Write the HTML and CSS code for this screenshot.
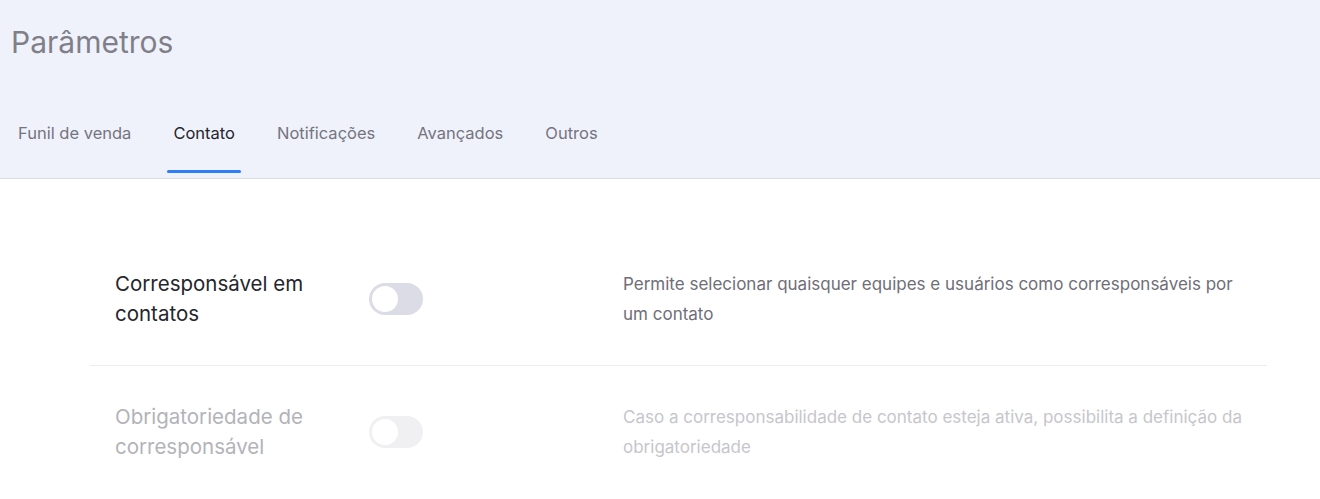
FILE: index.html
```html
<!DOCTYPE html>
<html lang="pt-BR">
<head>
    <meta charset="UTF-8">
    <meta name="viewport" content="width=device-width, initial-scale=1.0">
    <title>Parâmetros</title>
    <link rel="stylesheet" href="styles.css">
</head>
<body>
    <header class="page-header">
        <h1 class="page-title">Parâmetros</h1>
        <nav class="tabs">
            <a class="tab">Funil de venda</a>
            <a class="tab active">Contato</a>
            <a class="tab">Notificações</a>
            <a class="tab">Avançados</a>
            <a class="tab">Outros</a>
        </nav>
    </header>

    <main class="settings">
        <div class="setting-row">
            <div class="setting-label">Corresponsável em contatos</div>
            <div class="setting-control">
                <span class="toggle"><span class="knob"></span></span>
            </div>
            <div class="setting-desc">Permite selecionar quaisquer equipes e usuários como corresponsáveis por um contato</div>
        </div>
        <div class="setting-row disabled">
            <div class="setting-label">Obrigatoriedade de corresponsável</div>
            <div class="setting-control">
                <span class="toggle"><span class="knob"></span></span>
            </div>
            <div class="setting-desc">Caso a corresponsabilidade de contato esteja ativa, possibilita a definição da obrigatoriedade</div>
        </div>
    </main>
</body>
</html>
```

FILE: styles.css
```css
body {
    margin: 0;
    font-family: 'Inter', 'Noto Sans', sans-serif;
    background-color: #fff;
}
.page-header {
    background-color: #eff2fa;
    border-bottom: 1px solid #dcdce2;
    padding: 25px 12px 5px;
}
.page-title {
    margin: 0 0 0 -1px;
    font-size: 30px;
    line-height: 34px;
    font-weight: 400;
    color: #807f89;
}
.tabs {
    display: flex;
    gap: 30px;
    margin-top: 62px;
}
.tab {
    position: relative;
    padding: 0 6px 28px;
    font-size: 16.5px;
    line-height: 24px;
    font-weight: 400;
    color: #75747f;
    cursor: pointer;
}
.tab.active {
    color: #25252d;
}
.tab.active::after {
    content: '';
    position: absolute;
    left: 0;
    right: 0;
    bottom: 0;
    height: 3px;
    border-radius: 2px;
    background-color: #2d7ff9;
}
.settings {
    padding: 54px 53px 0 90px;
}
.setting-row {
    display: grid;
    grid-template-columns: 254px 254px 1fr;
    align-items: center;
    padding: 36px 20px 36px 25px;
}
.setting-row + .setting-row {
    border-top: 1px solid #ebebf0;
}
.setting-label {
    padding-right: 20px;
    font-size: 20.5px;
    line-height: 30px;
    font-weight: 400;
    color: #25252d;
}
.setting-desc {
    font-size: 17px;
    line-height: 30px;
    color: #6f6e78;
}
.toggle {
    display: flex;
    align-items: center;
    width: 54px;
    height: 32px;
    padding: 3px;
    box-sizing: border-box;
    border-radius: 16px;
    background-color: #dcdce6;
}
.knob {
    width: 26px;
    height: 26px;
    border-radius: 50%;
    background-color: #fff;
}
.disabled .setting-label {
    color: #b3b3b8;
}
.disabled .setting-desc {
    color: #c6c6cb;
}
.disabled .toggle {
    background-color: #f0f0f3;
}
```
